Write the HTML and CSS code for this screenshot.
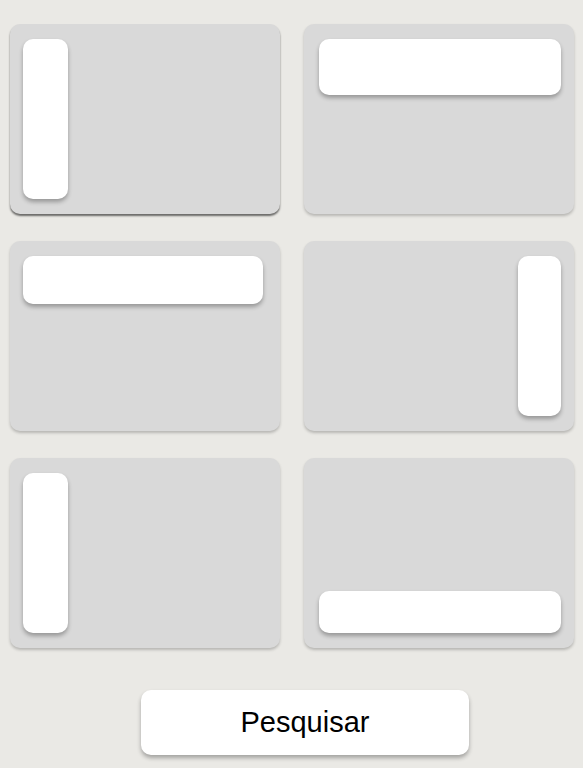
FILE: index.html
```html
<!DOCTYPE html>
<html>
<head>
<meta charset="utf-8">
<link rel="stylesheet" href="styles.css">
</head>
<body>
<div class="grid">
  <div class="card card-active">
    <div class="box box-v box-left"></div>
  </div>
  <div class="card">
    <div class="box box-h box-top-wide"></div>
  </div>
  <div class="card">
    <div class="box box-h box-top-narrow"></div>
  </div>
  <div class="card card-end">
    <div class="box box-v box-right"></div>
  </div>
  <div class="card">
    <div class="box box-v box-left"></div>
  </div>
  <div class="card card-bottom">
    <div class="box box-h box-bottom"></div>
  </div>
</div>
<div class="actions">
  <button class="search">Pesquisar</button>
</div>
</body>
</html>
```
FILE: styles.css
```css
html, body {
  margin: 0;
  padding: 0;
}
body {
  background: #eae9e5;
  font-family: "Liberation Sans", Arial, sans-serif;
  width: 583px;
  height: 768px;
  overflow: hidden;
}
.grid {
  display: grid;
  grid-template-columns: 270px 270px;
  grid-auto-rows: 190px;
  column-gap: 24px;
  row-gap: 27px;
  padding: 24px 0 0 10px;
}
.card {
  background: #d9d9d9;
  border-radius: 10px;
  box-shadow: 0 2px 3px rgba(0, 0, 0, 0.22);
  display: flex;
  flex-direction: column;
  align-items: flex-start;
  padding: 15px 13px;
  box-sizing: border-box;
}
.card-active {
  box-shadow: 0 2px 2px rgba(0, 0, 0, 0.55);
}
.card-end {
  align-items: flex-end;
}
.card-bottom {
  justify-content: flex-end;
}
.box {
  background: #fff;
  border-radius: 10px;
  box-shadow: 0 3px 4px rgba(0, 0, 0, 0.3);
}
.box-v {
  width: 45px;
  height: 160px;
}
.box-right {
  width: 43px;
}
.box-top-wide {
  width: 242px;
  height: 56px;
  margin-left: 2px;
}
.box-top-narrow {
  width: 240px;
  height: 48px;
}
.box-bottom {
  width: 242px;
  height: 42px;
  margin-left: 2px;
}
.actions {
  display: flex;
  justify-content: center;
  padding-top: 42px;
  padding-left: 27px;
}
.search {
  width: 328px;
  height: 65px;
  background: #fff;
  border: none;
  border-radius: 10px;
  box-shadow: 0 3px 4px rgba(0, 0, 0, 0.3);
  font-family: "Liberation Sans", Arial, sans-serif;
  font-size: 29px;
  color: #000;
  padding: 0;
  cursor: pointer;
}
```
